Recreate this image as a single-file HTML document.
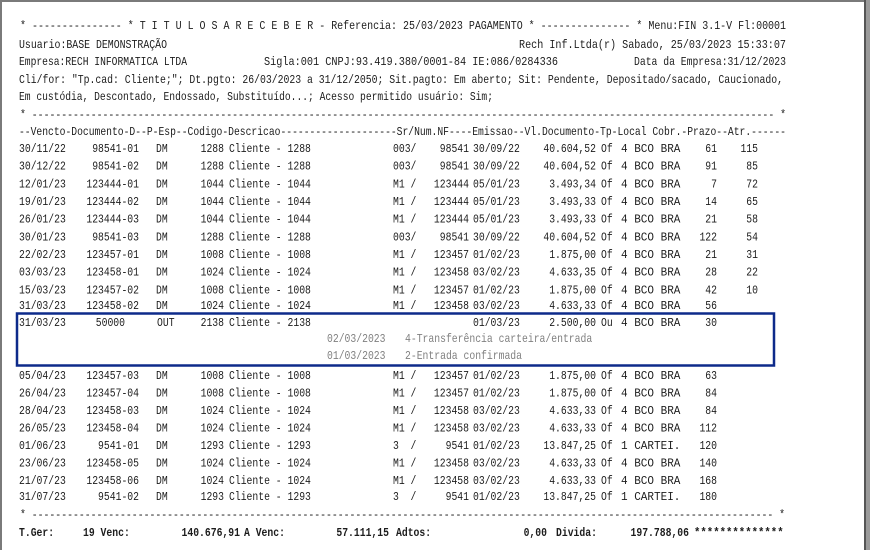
<!DOCTYPE html>
<html><head><meta charset="utf-8"><style>
html,body{margin:0;padding:0;background:#fff;width:870px;height:550px;overflow:hidden}
svg{display:block}
text{font-family:"Liberation Mono","DejaVu Sans Mono",monospace;font-size:12px;fill:#1c1c1c}
.g{fill:#808080}
.b{font-weight:bold}
</style></head><body>
<svg width="870" height="550" viewBox="0 0 870 550" xmlns="http://www.w3.org/2000/svg">
<rect x="0" y="0" width="870" height="550" fill="#fff"/>
<rect x="0" y="0" width="870" height="2" fill="#7a7a7a"/>
<rect x="0" y="0" width="2" height="550" fill="#7a7a7a"/>
<rect x="864" y="0" width="6" height="550" fill="#9a9a9a"/>
<rect x="864" y="0" width="2" height="550" fill="#555"/>

<text x="20" y="29" textLength="766" lengthAdjust="spacingAndGlyphs">* --------------- * T I T U L O S   A   R E C E B E R - Referencia: 25/03/2023 PAGAMENTO * --------------- * Menu:FIN 3.1-V Fl:00001</text>
<text x="19" y="48" textLength="148" lengthAdjust="spacingAndGlyphs">Usuario:BASE DEMONSTRAÇÃO</text>
<text x="519" y="48" textLength="267" lengthAdjust="spacingAndGlyphs">Rech Inf.Ltda(r)   Sabado, 25/03/2023 15:33:07</text>
<text x="19" y="65" textLength="168" lengthAdjust="spacingAndGlyphs">Empresa:RECH INFORMATICA LTDA</text>
<text x="264" y="65" textLength="294" lengthAdjust="spacingAndGlyphs">Sigla:001   CNPJ:93.419.380/0001-84   IE:086/0284336</text>
<text x="634" y="65" textLength="152" lengthAdjust="spacingAndGlyphs">Data da Empresa:31/12/2023</text>
<text x="19" y="83" textLength="764" lengthAdjust="spacingAndGlyphs">Cli/for: "Tp.cad: Cliente;"; Dt.pgto: 26/03/2023 a 31/12/2050; Sit.pagto: Em aberto; Sit: Pendente, Depositado/sacado, Caucionado,</text>
<text x="19" y="100" textLength="474" lengthAdjust="spacingAndGlyphs">Em custódia, Descontado, Endossado, Substituído...; Acesso permitido usuário: Sim;</text>
<text x="20" y="118" textLength="766" lengthAdjust="spacingAndGlyphs">* ------------------------------------------------------------------------------------------------------------------------------ *</text>
<text x="19" y="135" textLength="767" lengthAdjust="spacingAndGlyphs">--Vencto-Documento-D--P-Esp--Codigo-Descricao--------------------Sr/Num.NF----Emissao--Vl.Documento-Tp-Local Cobr.-Prazo--Atr.------</text>

<g id="rows"></g>

<rect x="17" y="313.5" width="757" height="52" fill="none" stroke="#0d2a8a" stroke-width="2.5"/>

<text x="20" y="518" textLength="765" lengthAdjust="spacingAndGlyphs">* ------------------------------------------------------------------------------------------------------------------------------ *</text>
</svg>
<script>
var CW=5.85;
var rows=[
[148,"30/11/22","98541-01","DM","1288","003/","98541","30/09/22","40.604,52","Of","4 BCO BRA","61","115"],
[165.7,"30/12/22","98541-02","DM","1288","003/","98541","30/09/22","40.604,52","Of","4 BCO BRA","91","85"],
[183.3,"12/01/23","123444-01","DM","1044","M1 /","123444","05/01/23","3.493,34","Of","4 BCO BRA","7","72"],
[201,"19/01/23","123444-02","DM","1044","M1 /","123444","05/01/23","3.493,33","Of","4 BCO BRA","14","65"],
[218.6,"26/01/23","123444-03","DM","1044","M1 /","123444","05/01/23","3.493,33","Of","4 BCO BRA","21","58"],
[236.3,"30/01/23","98541-03","DM","1288","003/","98541","30/09/22","40.604,52","Of","4 BCO BRA","122","54"],
[254,"22/02/23","123457-01","DM","1008","M1 /","123457","01/02/23","1.875,00","Of","4 BCO BRA","21","31"],
[271.6,"03/03/23","123458-01","DM","1024","M1 /","123458","03/02/23","4.633,35","Of","4 BCO BRA","28","22"],
[289.3,"15/03/23","123457-02","DM","1008","M1 /","123457","01/02/23","1.875,00","Of","4 BCO BRA","42","10"],
[305,"31/03/23","123458-02","DM","1024","M1 /","123458","03/02/23","4.633,33","Of","4 BCO BRA","56",""],
[322,"31/03/23","50000","OUT","2138","","","01/03/23","2.500,00","Ou","4 BCO BRA","30",""],
[375,"05/04/23","123457-03","DM","1008","M1 /","123457","01/02/23","1.875,00","Of","4 BCO BRA","63",""],
[392.5,"26/04/23","123457-04","DM","1008","M1 /","123457","01/02/23","1.875,00","Of","4 BCO BRA","84",""],
[410,"28/04/23","123458-03","DM","1024","M1 /","123458","03/02/23","4.633,33","Of","4 BCO BRA","84",""],
[427.5,"26/05/23","123458-04","DM","1024","M1 /","123458","03/02/23","4.633,33","Of","4 BCO BRA","112",""],
[445,"01/06/23","9541-01","DM","1293","3  /","9541","01/02/23","13.847,25","Of","1 CARTEI.","120",""],
[462.5,"23/06/23","123458-05","DM","1024","M1 /","123458","03/02/23","4.633,33","Of","4 BCO BRA","140",""],
[480,"21/07/23","123458-06","DM","1024","M1 /","123458","03/02/23","4.633,33","Of","4 BCO BRA","168",""],
[496,"31/07/23","9541-02","DM","1293","3  /","9541","01/02/23","13.847,25","Of","1 CARTEI.","180",""]
];
var g=document.getElementById("rows"),ns="http://www.w3.org/2000/svg";
function t(x,y,s,end,cls,cw){if(!s)return;var e=document.createElementNS(ns,"text");
var w=s.length*(cw||CW);if(end)x=x-w;
e.setAttribute("x",x);e.setAttribute("y",y);
e.setAttribute("textLength",w);e.setAttribute("lengthAdjust","spacingAndGlyphs");
if(cls)e.setAttribute("class",cls);
e.setAttribute("xml:space","preserve");e.style.whiteSpace="pre";e.textContent=s;g.appendChild(e);}
rows.forEach(function(r){var y=r[0]+4;
t(19,y,r[1]);
t(r[2]=="50000"?125:139,y,r[2],1);
t(r[3]=="OUT"?157:156,y,r[3]);
t(224,y,r[4],1);
t(229,y,"Cliente - "+r[4]);
t(393,y,r[5]);t(469,y,r[6],1);t(473,y,r[7]);t(596,y,r[8],1);t(601,y,r[9]);
t(621,y,r[10],0,0,6.6);t(717,y,r[11],1);t(758,y,r[12],1);});
t(327,342,"02/03/2023",0,"g");
t(405,342,"4-Transferência carteira/entrada",0,"g");
t(327,359,"01/03/2023",0,"g");
t(405,359,"2-Entrada confirmada",0,"g");
var y=536;
t(19,y,"T.Ger:",0,"b");t(83,y,"19 Venc:",0,"b");t(240,y,"140.676,91",1,"b");
t(244,y,"A Venc:",0,"b");t(389,y,"57.111,15",1,"b");t(396,y,"Adtos:",0,"b");
t(547,y,"0,00",1,"b");t(556,y,"Divida:",0,"b");t(689,y,"197.788,06",1,"b");
t(694,y,"**************",0,"b",6.4);
</script>
</body></html>
